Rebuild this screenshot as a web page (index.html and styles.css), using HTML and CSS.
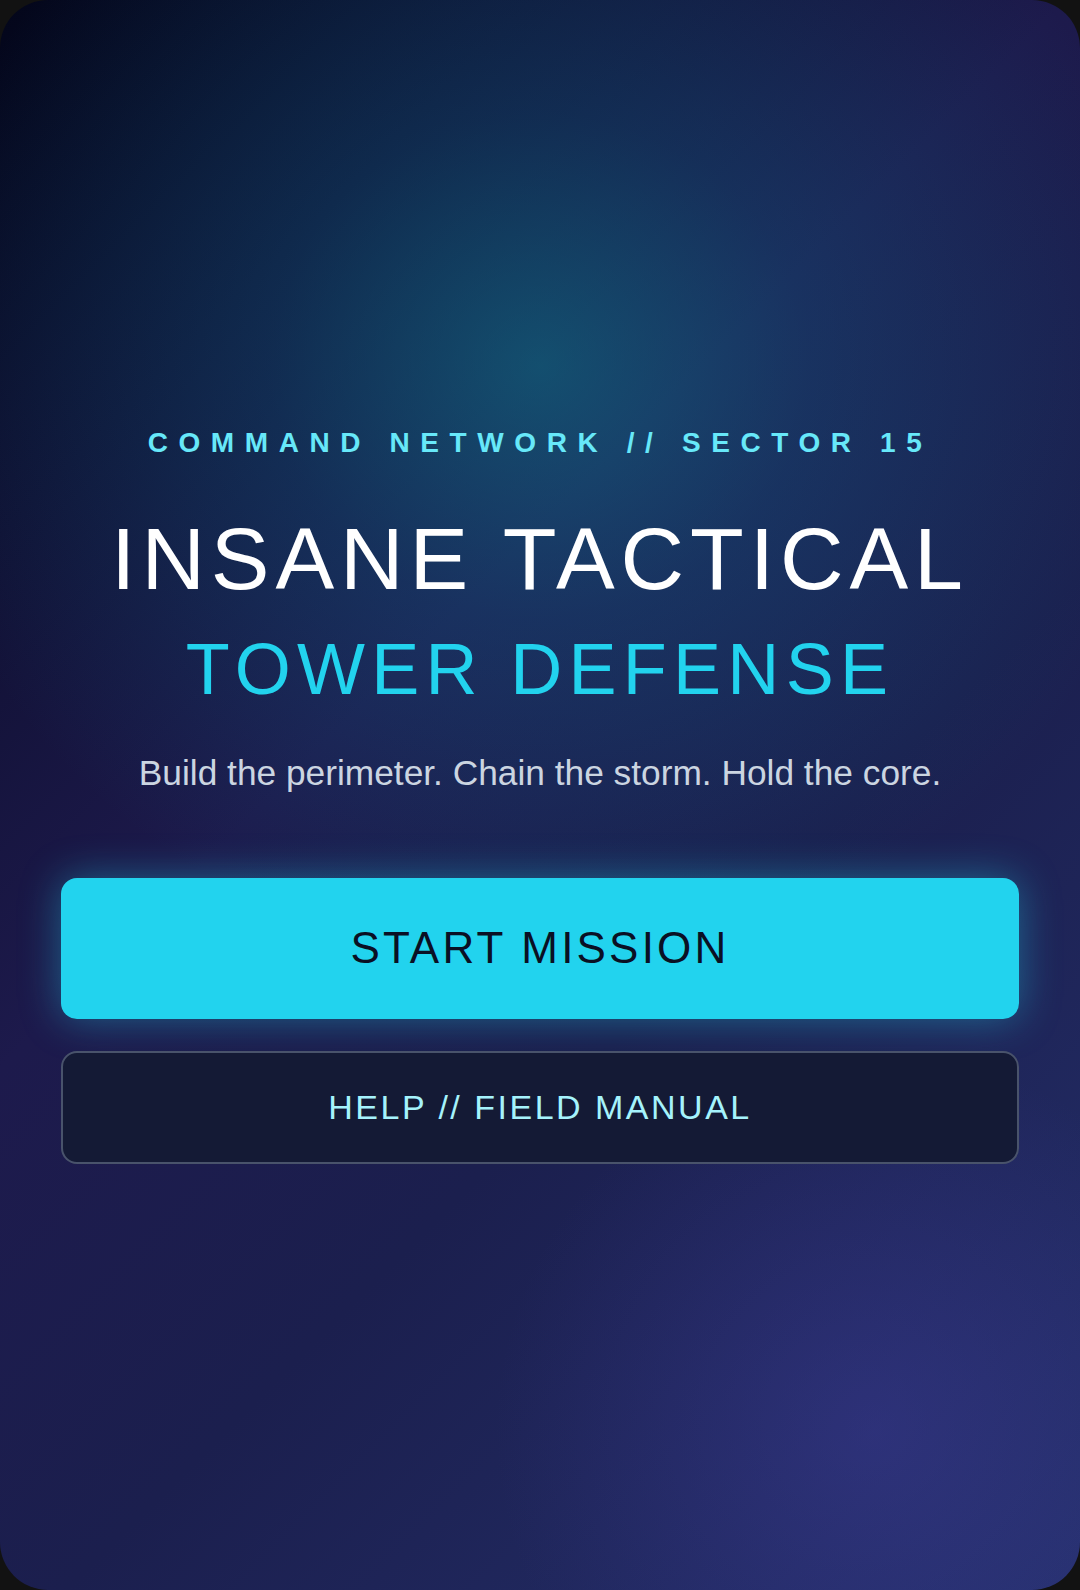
FILE: index.html
```html
<!DOCTYPE html>
<html lang="en">
<head>
<meta charset="utf-8">
<title>Insane Tactical Tower Defense</title>
<link rel="stylesheet" href="styles.css">
</head>
<body>
<main class="screen">
  <section class="hero">
    <p class="kicker">COMMAND NETWORK // SECTOR 15</p>
    <h1 class="title">
      <span class="title-main">INSANE TACTICAL</span>
      <span class="title-sub">TOWER DEFENSE</span>
    </h1>
    <p class="tagline">Build the perimeter. Chain the storm. Hold the core.</p>
  </section>
  <nav class="actions">
    <button class="btn btn-primary" type="button">START MISSION</button>
    <button class="btn btn-secondary" type="button">HELP // FIELD MANUAL</button>
  </nav>
</main>
</body>
</html>
```

FILE: styles.css
```css
* {
  box-sizing: border-box;
}

html, body {
  margin: 0;
  padding: 0;
  background: #121212;
}

body {
  width: 1080px;
  height: 1590px;
  font-family: "Liberation Sans", Arial, sans-serif;
}

.screen {
  width: 1080px;
  height: 1590px;
  border-radius: 48px;
  overflow: hidden;
  display: flex;
  flex-direction: column;
  justify-content: center;
  padding: 0 61px;
  background:
    radial-gradient(ellipse 640px 600px at 50% 23%, rgba(12, 150, 165, 0.44) 0%, rgba(12, 125, 160, 0.24) 42%, rgba(12, 100, 150, 0) 100%),
    radial-gradient(circle 380px at 81% 90%, rgba(70, 65, 170, 0.33) 0%, rgba(70, 65, 170, 0) 100%),
    linear-gradient(135deg, #03061a 0%, #1d1a4c 40%, #1b1f4e 62%, #25306c 100%);
}

.hero {
  display: flex;
  flex-direction: column;
  align-items: center;
  text-align: center;
}

.kicker {
  margin: 0;
  font-size: 28px;
  line-height: 32px;
  font-weight: 700;
  letter-spacing: 10.6px;
  color: #67e8f9;
}

.title {
  margin: 52px 0 0;
  display: flex;
  flex-direction: column;
  align-items: center;
  font-weight: 400;
}

.title-main {
  font-size: 88px;
  line-height: 96px;
  letter-spacing: 5.9px;
  color: #ffffff;
}

.title-sub {
  margin-top: 22px;
  font-size: 72px;
  line-height: 80px;
  letter-spacing: 6.3px;
  color: #22d3ee;
}

.tagline {
  margin: 42px 0 0;
  font-size: 35.3px;
  line-height: 44px;
  color: #cbd5e1;
}

.actions {
  margin-top: 83px;
  display: flex;
  flex-direction: column;
  gap: 32px;
}

.btn {
  width: 100%;
  display: flex;
  align-items: center;
  justify-content: center;
  font-family: "Liberation Sans", Arial, sans-serif;
  border-radius: 16px;
  cursor: pointer;
  padding: 0;
}

.btn-primary {
  height: 141px;
  border: none;
  background: #22d3ee;
  color: #0a1024;
  font-size: 44px;
  letter-spacing: 3.2px;
  box-shadow: 0 0 40px rgba(34, 211, 238, 0.4);
}

.btn-secondary {
  height: 113px;
  border: 2px solid rgba(148, 163, 184, 0.42);
  background: #141a35;
  color: #a5f3fc;
  font-size: 34px;
  letter-spacing: 2.5px;
}
```
